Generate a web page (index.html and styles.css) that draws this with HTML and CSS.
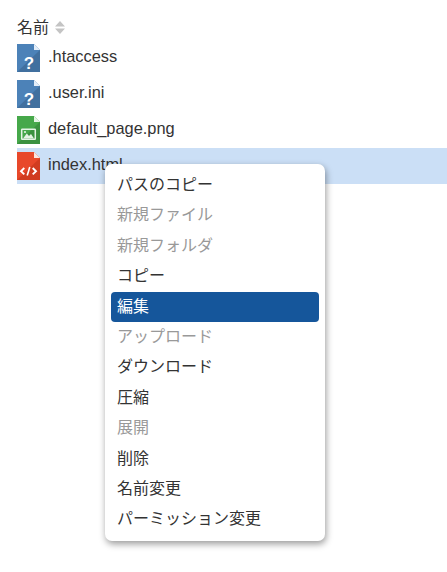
FILE: index.html
```html
<!DOCTYPE html>
<html lang="ja">
<head>
<meta charset="utf-8">
<title>ファイル</title>
<link rel="stylesheet" href="styles.css">
</head>
<body>
<main class="files">
  <div class="head"><span class="name">名前</span>
    <svg class="sort" width="10" height="13" viewBox="0 0 10 13"><path d="M5 0L10 5.5H0Z M0 7.5H10L5 13Z" fill="#c4c4c4"/></svg>
  </div>
  <div class="row">
    <svg class="icon" viewBox="0 0 23 28"><path d="M0 0H17L23 6V28H0Z" fill="#4c82b8"/><path d="M0 28L23 6V28Z" fill="#41709f"/><path d="M17 0L23 6H17Z" fill="#e4eef8"/><text x="12" y="24.5" class="glyph q">?</text></svg>
    <span class="name">.htaccess</span>
  </div>
  <div class="row">
    <svg class="icon" viewBox="0 0 23 28"><path d="M0 0H17L23 6V28H0Z" fill="#4c82b8"/><path d="M0 28L23 6V28Z" fill="#41709f"/><path d="M17 0L23 6H17Z" fill="#e4eef8"/><text x="12" y="24.5" class="glyph q">?</text></svg>
    <span class="name">.user.ini</span>
  </div>
  <div class="row">
    <svg class="icon" viewBox="0 0 23 28"><path d="M0 0H17L23 6V28H0Z" fill="#46a84a"/><path d="M0 28L23 6V28Z" fill="#3b9140"/><path d="M17 0L23 6H17Z" fill="#e6f4e6"/><rect x="4.7" y="13.2" width="13.6" height="10" rx="0.5" fill="none" stroke="#e4f3e4" stroke-width="1.5"/><path d="M6 22.5L9.8 17.6L12 20L14 18L17 22.5Z" fill="#e4f3e4"/><circle cx="8" cy="16" r="1.1" fill="#e4f3e4"/></svg>
    <span class="name">default_page.png</span>
  </div>
  <div class="row selected">
    <svg class="icon" viewBox="0 0 23 28"><path d="M0 0H17L23 6V28H0Z" fill="#e8482a"/><path d="M0 28L23 6V28Z" fill="#d13c20"/><path d="M17 0L23 6H17Z" fill="#fbe4de"/><path d="M7.3 16L4 19.2L7.3 22.4M15.7 16L19 19.2L15.7 22.4" fill="none" stroke="#fff" stroke-width="1.9"/><path d="M12.8 15L10.2 23.5" fill="none" stroke="#fff" stroke-width="1.6"/></svg>
    <span class="name">index.html</span>
  </div>
</main>
<ul class="menu">
  <li>パスのコピー</li>
  <li class="off">新規ファイル</li>
  <li class="off">新規フォルダ</li>
  <li>コピー</li>
  <li class="active">編集</li>
  <li class="off">アップロード</li>
  <li>ダウンロード</li>
  <li>圧縮</li>
  <li class="off">展開</li>
  <li>削除</li>
  <li>名前変更</li>
  <li>パーミッション変更</li>
</ul>
</body>
</html>
```

FILE: styles.css
```css
* { box-sizing: border-box; }
html, body { margin: 0; height: 100%; background: #fff; overflow: hidden; }
body {
  position: relative;
  font-family: "Liberation Sans", "Noto Sans CJK JP", sans-serif;
  font-size: 16.4px;
  color: #333;
}
.files { padding: 15px 0 0 17px; }
.head { display: flex; align-items: center; gap: 6px; height: 25px; font-size: 16px; }
.name { padding-bottom: 4px; }
.sort { margin-bottom: 1px; }
.row { display: flex; align-items: center; gap: 8px; height: 36px; }
.icon { width: 23px; height: 28px; flex: none; display: block; }
.glyph { font-family: "Liberation Sans", sans-serif; font-weight: 700; text-anchor: middle; fill: #fff; }
.q { font-size: 17px; }
.selected { background: #cbdff6; }
.menu {
  position: absolute;
  left: 105px;
  top: 164px;
  width: 220px;
  height: 377px;
  margin: 0;
  padding: 6px;
  list-style: none;
  background: #fff;
  border-radius: 7px;
  box-shadow: 1px 3px 7px rgba(0, 0, 0, 0.4);
  font-size: 16px;
}
.menu li { height: 30.4px; line-height: 30.4px; padding-left: 6px; border-radius: 4px; }
.menu .off { color: #999; }
.menu .active { background: #15569b; color: #fff; }
```
